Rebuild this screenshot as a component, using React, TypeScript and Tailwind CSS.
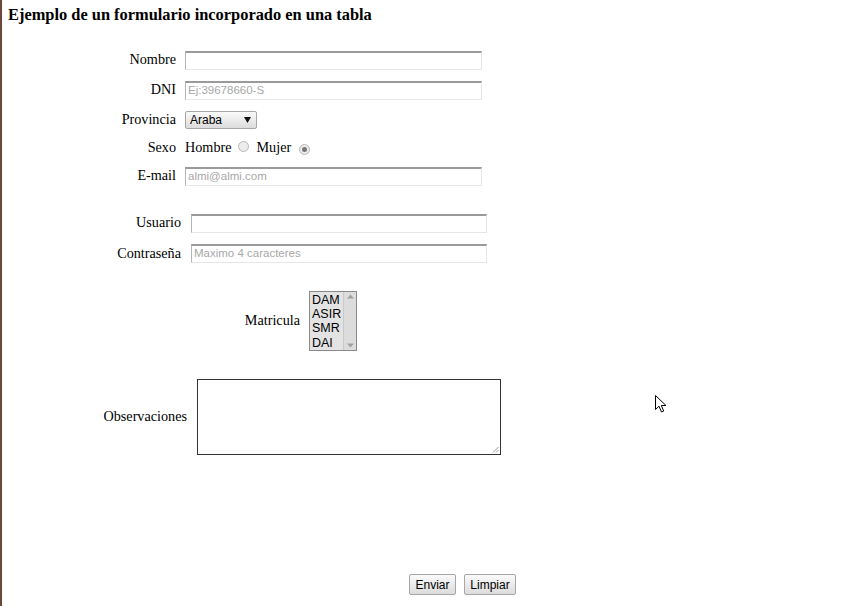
import React from "react";

const serif = { fontFamily: '"Liberation Serif", "Times New Roman", serif' };
const sans = { fontFamily: '"Liberation Sans", Arial, sans-serif' };

function TextInput({ w, placeholder }: { w: string; placeholder?: string }) {
  return (
    <div
      className={`${w} h-[19px] bg-white border-t-2 border-t-[#9a9a9a] border-l border-l-[#b5b5b5] border-r border-r-[#e6e6e6] border-b border-b-[#e6e6e6] flex items-center pl-[2px] text-[11.5px] text-[#a8a8a8] leading-none`}
      style={sans}
    >
      {placeholder}
    </div>
  );
}

function Radio({ checked }: { checked?: boolean }) {
  return (
    <span className="inline-flex w-[11px] h-[11px] rounded-full border border-[#b8b8b8] bg-[#ececec] items-center justify-center">
      {checked && <span className="w-[5px] h-[5px] rounded-full bg-[#777]" />}
    </span>
  );
}

function Label({ w, children }: { w: string; children: React.ReactNode }) {
  return <div className={`${w} text-right shrink-0`}>{children}</div>;
}

export default function App() {
  return (
    <div className="flex w-full h-[606px] bg-white overflow-hidden">
      <div className="w-[2px] shrink-0 bg-[#6b473c]" />
      <div className="relative flex-1 flex flex-col text-[14.2px] text-black" style={serif}>
        {/* title */}
        <div className="h-[25px] pt-[5px] pl-[6px] text-[16.4px] font-bold leading-[20px]">
          Ejemplo de un formulario incorporado en una tabla
        </div>

        {/* group 1 */}
        <div className="mt-[20px] flex flex-col">
          <div className="h-[30px] flex items-center">
            <Label w="w-[174px]">Nombre</Label>
            <div className="ml-[9px]"><TextInput w="w-[297px]" /></div>
          </div>
          <div className="h-[30px] flex items-center">
            <Label w="w-[174px]">DNI</Label>
            <div className="ml-[9px]"><TextInput w="w-[297px]" placeholder="Ej:39678660-S" /></div>
          </div>
          <div className="h-[28px] flex items-center pt-[1px]">
            <Label w="w-[174px]">Provincia</Label>
            <div className="ml-[9px]">
              <div
                className="w-[72px] h-[18px] rounded-[2px] border border-[#a6a6a6] bg-gradient-to-b from-[#fafafa] to-[#dcdcdc] flex items-center justify-between pl-[4px] pr-[5px] text-[12px] leading-none"
                style={sans}
              >
                <span>Araba</span>
                <svg width="7" height="6" viewBox="0 0 7 6"><path d="M0 0 L7 0 L3.5 6Z" fill="#111" /></svg>
              </div>
            </div>
          </div>
          <div className="h-[28px] flex items-center pt-[1px]">
            <Label w="w-[174px]">Sexo</Label>
            <div className="ml-[9px] flex items-center">
              <span>Hombre</span>
              <span className="ml-[6px]"><Radio /></span>
              <span className="ml-[8px]">Mujer</span>
              <span className="ml-[8px]"><Radio checked /></span>
            </div>
          </div>
          <div className="h-[30px] flex items-center">
            <Label w="w-[174px]">E-mail</Label>
            <div className="ml-[9px]"><TextInput w="w-[297px]" placeholder="almi@almi.com" /></div>
          </div>
        </div>

        {/* group 2 */}
        <div className="mt-[17px] flex flex-col">
          <div className="h-[30px] flex items-center">
            <Label w="w-[179px]">Usuario</Label>
            <div className="ml-[10px]"><TextInput w="w-[296px]" /></div>
          </div>
          <div className="h-[31px] flex items-center">
            <Label w="w-[179px]">Contraseña</Label>
            <div className="ml-[10px]"><TextInput w="w-[296px]" placeholder="Maximo 4 caracteres" /></div>
          </div>
        </div>

        {/* group 3 */}
        <div className="mt-[22px] flex items-center">
          <Label w="w-[298px]">Matricula</Label>
          <div className="ml-[9px] w-[48px] h-[60px] border border-[#8a8a8a] bg-[#e3e3e3] flex">
            <div className="flex-1 flex flex-col text-[12.5px] leading-[14.2px] pl-[2px] pt-[1px]" style={sans}>
              <span>DAM</span>
              <span>ASIR</span>
              <span>SMR</span>
              <span>DAI</span>
            </div>
            <div className="w-[13px] border-l border-[#c8c8c8] bg-[#dcdcdc] flex flex-col justify-between items-center py-[2px]">
              <svg width="7" height="5" viewBox="0 0 7 5"><path d="M0 4.5 L3.5 0.5 L7 4.5Z" fill="#a0a0a0" /></svg>
              <svg width="7" height="5" viewBox="0 0 7 5"><path d="M0 0.5 L3.5 4.5 L7 0.5Z" fill="#a0a0a0" /></svg>
            </div>
          </div>
        </div>

        {/* group 4 */}
        <div className="mt-[28px] flex items-center">
          <Label w="w-[185px]">Observaciones</Label>
          <div className="ml-[10px] relative w-[304px] h-[76px] border border-[#333] bg-white">
            <svg className="absolute right-[1px] bottom-[1px]" width="7" height="7" viewBox="0 0 7 7">
              <path d="M6.5 1 L1 6.5 M6.5 4 L4 6.5" stroke="#999" strokeWidth="1" />
            </svg>
          </div>
        </div>

        {/* buttons */}
        <div className="mt-[119px] flex items-center pl-[407px] gap-[8px]" style={sans}>
          <div className="w-[47px] h-[21px] rounded-[2px] border border-[#a6a6a6] bg-gradient-to-b from-[#fafafa] to-[#dcdcdc] flex items-center justify-center text-[12px]">
            Enviar
          </div>
          <div className="w-[52px] h-[21px] rounded-[2px] border border-[#a6a6a6] bg-gradient-to-b from-[#fafafa] to-[#dcdcdc] flex items-center justify-center text-[12px]">
            Limpiar
          </div>
        </div>

        {/* mouse cursor */}
        <svg className="absolute left-[653px] top-[395px]" width="13" height="19" viewBox="0 0 13 19">
          <path d="M0.5 0.5 L0.5 14.5 L4 11.2 L6.5 17 L8.7 16 L6.3 10.5 L11 10.5 Z" fill="white" stroke="black" strokeWidth="1" />
        </svg>
      </div>
    </div>
  );
}
